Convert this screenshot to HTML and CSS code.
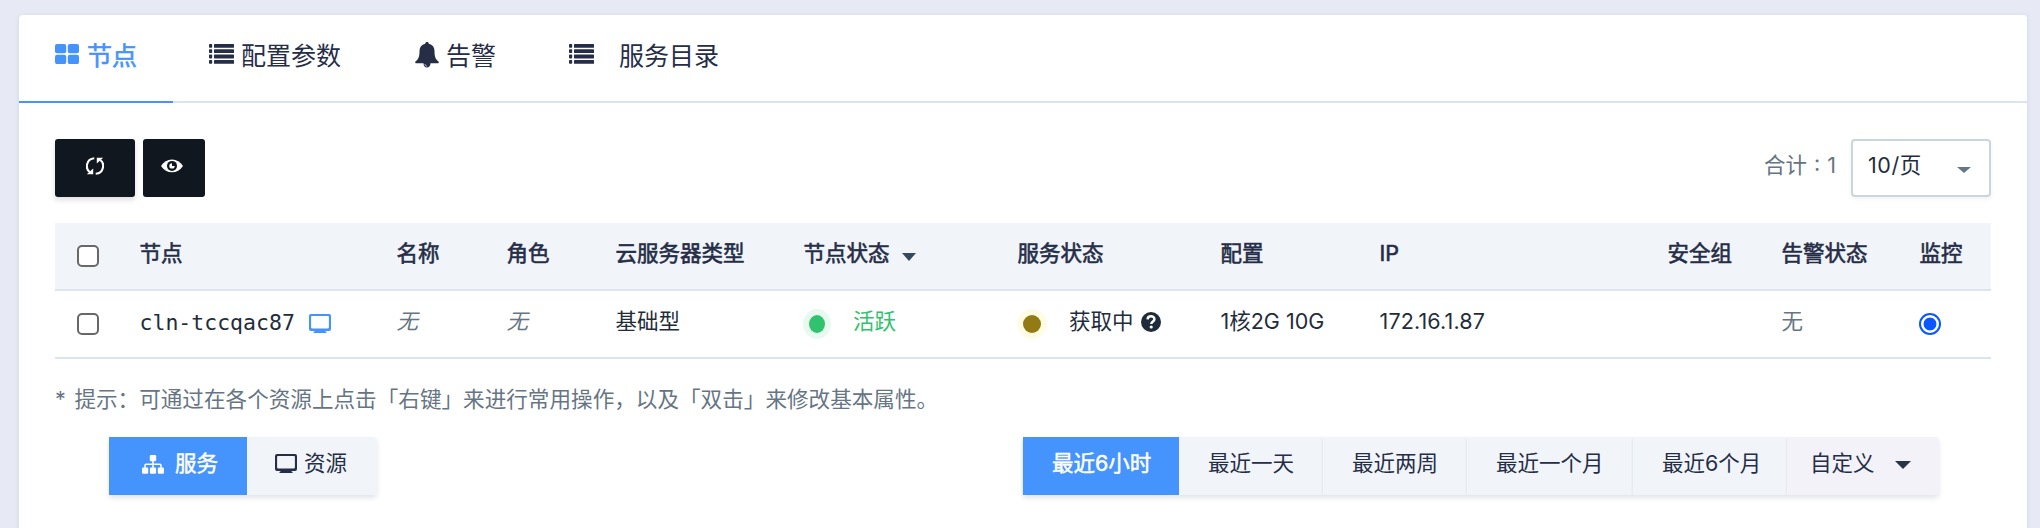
FILE: index.html
```html
<!DOCTYPE html>
<html lang="zh-CN">
<head>
<meta charset="utf-8">
<title>节点</title>
<link rel="stylesheet" href="styles.css">
</head>
<body>
<svg class="defs" width="0" height="0">
  <symbol id="list" viewBox="0 0 25 20">
    <g fill="currentColor"><rect width="3.2" height="3.8" rx=".8"/><rect y="5.3" width="3.2" height="3.8" rx=".8"/><rect y="10.6" width="3.2" height="3.8" rx=".8"/><rect y="16" width="3.2" height="3.8" rx=".8"/>
    <rect x="5" width="20" height="3.8" rx=".6"/><rect x="5" y="5.3" width="20" height="3.8" rx=".6"/><rect x="5" y="10.6" width="20" height="3.8" rx=".6"/><rect x="5" y="16" width="20" height="3.8" rx=".6"/></g>
  </symbol>
  <symbol id="screen" viewBox="0 0 22 19">
    <path fill="currentColor" fill-rule="evenodd" d="M2 0h18a2 2 0 0 1 2 2v13a2 2 0 0 1-2 2h-3.500v.6l1 .4v1h-13v-1l1-.4v-.6H2a2 2 0 0 1-2-2V2a2 2 0 0 1 2-2zM2.900 2.100a.8.8 0 0 0-.8.8v10.700a.8.8 0 0 0 .8.8h16.200a.8.8 0 0 0 .8-.8V2.900a.8.8 0 0 0-.8-.8z"/>
  </symbol>
</svg>
<main class="card">
  <nav class="tabs">
    <a class="tab tab-nodes active"><svg class="icon-grid" width="24" height="20" viewBox="0 0 24 20"><g fill="currentColor"><rect width="11.200" height="9.300" rx="2"/><rect x="12.800" width="11.200" height="9.300" rx="2"/><rect y="10.800" width="11.200" height="9.300" rx="2"/><rect x="12.800" y="10.800" width="11.200" height="9.300" rx="2"/></g></svg><span>节点</span></a>
    <a class="tab tab-params"><svg width="25" height="20"><use href="#list"/></svg><span>配置参数</span></a>
    <a class="tab tab-alarm"><svg class="icon-bell" width="24" height="26" viewBox="0 0 24 26"><path fill="currentColor" d="M12 0c1.100 0 1.700.7 1.800 1.700 3.800.9 5.700 3.600 5.700 7.300 0 5 .8 8.200 3.800 10.200.8.700.6 2-.5 2H15.500c0 2.600-1.300 4.300-3.500 4.300s-3.500-1.700-3.500-4.300H1.200c-1.100 0-1.300-1.300-.5-2C3.700 17.200 4.500 14 4.500 9c0-3.700 1.900-6.400 5.700-7.300C10.300.7 10.900 0 12 0z"/><path d="M9.900 22c.2 1.300 1 2.100 2.300 2.200" fill="none" stroke="#fff" stroke-width=".7"/></svg><span>告警</span></a>
    <a class="tab tab-catalog"><svg width="25" height="20"><use href="#list"/></svg><span>服务目录</span></a>
  </nav>
  <section class="toolbar">
    <button class="dark refresh"><svg width="18" height="18" viewBox="0 0 18 18"><g fill="none" stroke="#fff" stroke-width="2.100"><path d="M8.300 1.200C-.4 2-.7 12 3.700 15"/><path d="M9.700 16.800C18.400 16 18.700 6 14.300 3"/></g><path fill="#fff" d="M.8 17.300h6.400V11.500zM17.200.7h-6.400v5.800z"/></svg></button>
    <button class="dark view"><svg width="22" height="14" viewBox="0 0 22 14"><path fill="#fff" d="M0 7C2.800 2.700 6.500.5 11 .5S19.200 2.700 22 7c-2.800 4.300-6.500 6.300-11 6.300S2.800 11.300 0 7z"/><circle cx="11" cy="6.900" r="5" fill="#10171f"/><circle cx="11" cy="6.900" r="2.700" fill="#fff"/><path fill="#10171f" d="M11 3.600v3.300h3.300a3.300 3.300 0 0 0-3.300-3.300z"/></svg></button>
    <span class="total">合计 : 1</span>
    <div class="select"><span>10/页</span><i class="caret"></i></div>
  </section>
  <section class="table">
    <div class="row head">
      <div class="check"><i class="box"></i></div><div>节点</div><div>名称</div><div>角色</div><div>云服务器类型</div><div class="sortable">节点状态<i class="caret"></i></div><div>服务状态</div><div>配置</div><div>IP</div><div>安全组</div><div>告警状态</div><div>监控</div>
    </div>
    <div class="row">
      <div class="check"><i class="box"></i></div>
      <div class="node"><span>cln-tccqac87</span><svg width="22" height="19"><use href="#screen"/></svg></div>
      <div class="none"><em>无</em></div>
      <div class="none"><em>无</em></div>
      <div>基础型</div>
      <div class="status up"><i class="dot"></i><span>活跃</span></div>
      <div class="status pending"><i class="dot"></i><span>获取中</span><svg width="20" height="20" viewBox="0 0 20 20"><circle cx="10" cy="10" r="10" fill="#1d2b3a"/><path d="M6.600 7.400C6.700 3.200 13.500 3.300 13.400 7.300c0 2.300-2.900 2.200-3.100 4.700" fill="none" stroke="#fff" stroke-width="2.500"/><circle cx="10.200" cy="15" r="1.600" fill="#fff"/></svg></div>
      <div>1核2G 10G</div>
      <div class="ip">172.16.1.87</div>
      <div></div>
      <div class="none">无</div>
      <div><i class="radio"></i></div>
    </div>
  </section>
  <p class="hint">* 提示：可通过在各个资源上点击「右键」来进行常用操作，以及「双击」来修改基本属性。</p>
  <section class="controls">
    <div class="group">
      <button class="seg service on"><svg width="22" height="19" viewBox="0 0 22 19"><g fill="#fff"><rect x="7.800" width="6.400" height="6.200" rx="1.200"/><rect y="12.500" width="6.200" height="6.200" rx="1.200"/><rect x="7.900" y="12.500" width="6.200" height="6.200" rx="1.200"/><rect x="15.800" y="12.500" width="6.200" height="6.200" rx="1.200"/></g><path d="M11 5v8M3 13V10.200q0-1 1-1h14q1 0 1 1V13" fill="none" stroke="#fff" stroke-width="1.500"/></svg><span>服务</span></button>
      <button class="seg resource"><svg width="22" height="19"><use href="#screen"/></svg><span>资源</span></button>
    </div>
    <div class="group ranges">
      <button class="seg on">最近6小时</button><button class="seg">最近一天</button><button class="seg">最近两周</button><button class="seg">最近一个月</button><button class="seg">最近6个月</button><button class="seg custom">自定义<i class="caret"></i></button>
    </div>
  </section>
</main>
</body>
</html>
```
FILE: styles.css
```css
* { box-sizing: border-box; }
body {
  margin: 0;
  height: 528px;
  overflow: hidden;
  padding: 15px 13px 0 19px;
  background: #e7eaf5;
  color: #1f2d3b;
  font: 21.5px/32px Inter, "Noto Sans CJK SC", sans-serif;
  white-space: nowrap;
}
.defs { display: block; position: absolute; }
svg { display: block; flex: none; }
button { border: 0; margin: 0; padding: 0; font: inherit; color: inherit; }
.card {
  height: 530px;
  background: #fff;
  border-radius: 4px 4px 0 0;
  box-shadow: 0 1px 4px rgba(120, 150, 190, .25);
}

.tabs {
  display: flex;
  height: 88px;
  border-bottom: 2px solid #dae4ed;
  color: #252d47;
  font-size: 25px;
}
.tab {
  display: flex;
  height: 88px;
  padding: 29px 36px 0;
  line-height: 24px;
}
.tab span { margin-left: 7px; }
.tab-nodes { width: 154px; }
.tab.active { color: #4593fc; -webkit-text-stroke: .6px currentColor; border-bottom: 2px solid #4593fc; }
.tab.active span { margin-left: 8px; }
.icon-bell { margin-top: -2px; }
.tab-params { width: 206px; }
.tab-alarm { width: 154px; }
.tab-catalog span { margin-left: 25px; }

.toolbar { display: flex; padding: 36px 36px 0; height: 120px; }
.dark {
  display: flex;
  justify-content: center;
  height: 58px;
  border-radius: 3px;
  background: #10171f;
}
.refresh { width: 80px; margin-right: 8px; padding-top: 18px; box-shadow: 0 3px 5px rgba(60, 30, 60, .15); }
.view { width: 62px; padding: 20px 5px 0 0; }
.total { margin-left: auto; margin-right: 15px; padding-top: 10px; color: #667584; word-spacing: 1px; }
.select {
  display: flex;
  width: 140px;
  height: 58px;
  padding: 8px 18px 0 15px;
  border: 2px solid #cad5e0;
  border-radius: 4px;
  box-shadow: 0 2px 4px rgba(60, 70, 90, .07);
}
.select span { letter-spacing: .6px; }
.select .caret { margin: 18px 0 0 auto; color: #667788; border-width: 6px 7px 0; }
.caret { display: block; width: 0; height: 0; border: solid transparent; border-top-color: currentColor; border-width: 8px 7px 0; }

.table { margin: 0 36px; }
.row {
  display: grid;
  grid-template-columns: 84.5px 257px 110px 109px 188px 214px 203px 159px 288px 114px 138px 71.5px;
  height: 68px;
  padding-top: 14px;
  border-bottom: 2px solid #dce5ed;
}
.head { background: #f1f5f9; color: #252d47; -webkit-text-stroke: .6px currentColor; }
.check { padding-left: 22px; }
.box { display: block; width: 22px; height: 22px; margin-top: 8px; border: 2px solid #686868; border-radius: 5px; background: #fff; }
.sortable { display: flex; }
.sortable .caret { margin: 16px 0 0 12px; color: #34495b; }
.node { display: flex; font-family: "DejaVu Sans Mono", monospace; }
.node span { margin-top: 2px; }
.node svg { margin: 9px 0 0 14px; color: #4593fc; }
.none { color: #667584; }
.status { display: flex; }
.dot { width: 16px; height: 18px; border-radius: 50%; margin: 10px 28px 0 5.5px; }
.up { color: #30c26e; }
.up .dot { background: #30c26e; box-shadow: 0 0 0 6px #e8faf0; }
.pending .dot { width: 18px; background: #927a14; box-shadow: 0 0 0 6px #fffce5; }
.pending svg { margin: 7px 0 0 7.5px; }
.ip { letter-spacing: .15px; }
.radio { display: block; width: 22px; height: 22px; margin: 8px 0 0 -.5px; border: 2px solid #0b57ff; border-radius: 50%; background: radial-gradient(circle, #0b57ff 6px, #fff 6.800px); }

.hint { margin: 24px 36px 0; color: #667584; font-size: 21.6px; word-spacing: 2.5px; }
.controls { display: flex; justify-content: space-between; padding: 22px 88px 0 90px; color: #252d47; }
.group { display: flex; height: 58px; box-shadow: 0 3px 5px rgba(50, 70, 90, .14); border-radius: 0 4px 4px 0; }
.seg {
  display: flex;
  height: 58px;
  padding: 10px 0 0 29px;
  background: #f1f5f9;
}
.seg.on { background: #4593fc; color: #fff; -webkit-text-stroke: .5px currentColor; }
.service { width: 138px; padding-left: 33px; }
.resource { width: 130px; padding-left: 28px; border-radius: 0 4px 4px 0; }
.service svg { margin: 8px 11px 0 0; }
.resource svg { margin: 7px 7px 0 0; }
.ranges .seg { width: 144px; box-shadow: -1px 2px 2px rgba(50, 70, 90, .07); clip-path: inset(0 0 0 -2px); }
.ranges .seg:nth-child(1) { width: 156px; }
.ranges .seg:nth-child(2) { box-shadow: none; }
.ranges .seg:nth-child(4) { width: 166px; }
.ranges .seg:nth-child(5) { width: 154px; }
.ranges .custom { width: 152px; padding-left: 23px; background: #f2f2f8; border-radius: 0 4px 4px 0; }
.custom .caret { margin: 14px 0 0 20px; border-width: 8px 8px 0; color: #263646; }
```
